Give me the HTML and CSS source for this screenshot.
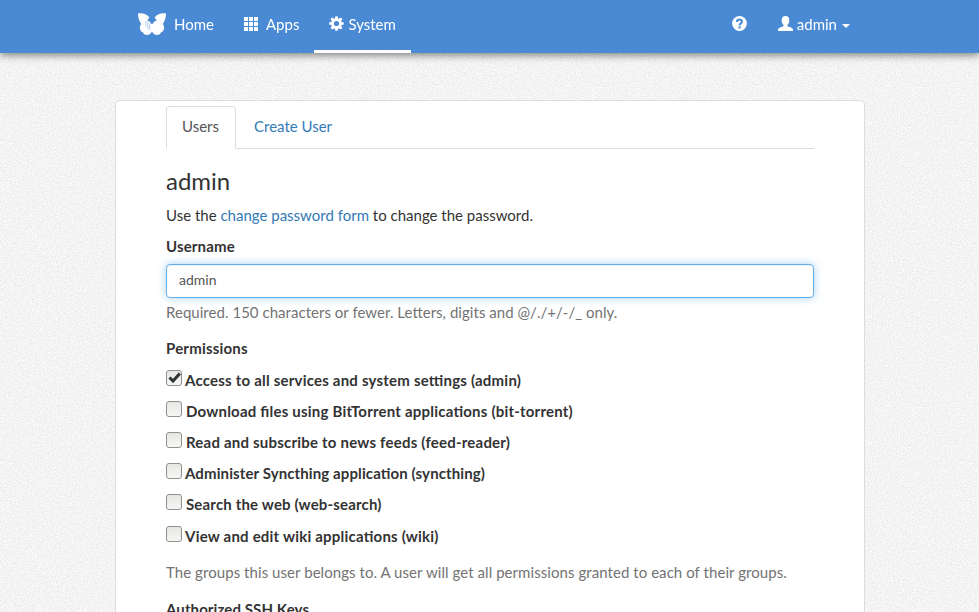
FILE: index.html
```html
<!DOCTYPE html>
<html lang="en">
<head>
<meta charset="utf-8">
<title>admin</title>
<link rel="stylesheet" href="styles.css">
</head>
<body>
<svg class="grain" aria-hidden="true">
  <filter id="grain" x="0" y="0" width="100%" height="100%" color-interpolation-filters="sRGB">
    <feTurbulence type="fractalNoise" baseFrequency="0.8" numOctaves="4" seed="4"/>
    <feColorMatrix values="0.15 0 0 0 0.88  0.15 0 0 0 0.88  0.15 0 0 0 0.88  0 0 0 0 1"/>
  </filter>
  <rect width="100%" height="100%" filter="url(#grain)"/>
</svg>
<header class="navbar">
  <div class="container">
    <nav class="nav">
      <a class="home" href="#"><svg class="logo" viewBox="0 0 28 23"><path fill="#fff" d="M0 .5C4-.5 9 1 11.500 4.500L9 7.500L11 8L13.200 10.500Q14 11.500 14.800 10.500L17 8L19 7.500L16.500 4.500C19 1 24-.5 28 .5C28 4 27 8 24.800 11C27 13.500 26.500 18 23 19.500C21.500 23.200 16 22.800 14 18.500C12 22.800 6.500 23.200 5 19.500C1.500 18 1 13.500 3.200 11C1 8 0 4 0 .5Z"/><path d="M7.800 8V13.500M9.800 8.500V16M11.700 10V17.500" stroke="#4a8ad4" stroke-width=".6" opacity=".7"/></svg><span>Home</span></a>
      <a class="apps" href="#"><svg class="grid-icon" viewBox="0 0 14 14"><path fill="#fff" d="M0 0h4v4H0zM5 0h4v4H5zM10 0h4v4h-4zM0 5h4v4H0zM5 5h4v4H5zM10 5h4v4h-4zM0 10h4v4H0zM5 10h4v4H5zM10 10h4v4h-4z"/></svg><span>Apps</span></a>
      <a class="system active" href="#"><svg class="cog" viewBox="0 0 15 15"><mask id="hub" maskUnits="userSpaceOnUse" x="0" y="0" width="15" height="15"><rect width="15" height="15" fill="#fff"/><circle cx="7.500" cy="7.500" r="2.600" fill="#000"/></mask><g mask="url(#hub)" fill="#fff"><circle cx="7.500" cy="7.500" r="5.300"/><path id="t" d="M5.900 2.500L6.400.2h2.200l.5 2.300v10l-.5 2.300H6.400l-.5-2.300z"/><use href="#t" transform="rotate(45 7.500 7.500)"/><use href="#t" transform="rotate(90 7.500 7.500)"/><use href="#t" transform="rotate(135 7.500 7.500)"/></g></svg><span>System</span></a>
    </nav>
    <nav class="nav">
      <a class="help" href="#" aria-label="Help"><svg viewBox="0 0 15 15"><circle cx="7.500" cy="7.500" r="7.400" fill="#fff"/><path d="M4.900 6.100C4.900 2.700 10 2.900 10 5.700C10 7.500 7.600 7.200 7.600 9.400" fill="none" stroke="#4a8ad4" stroke-width="2"/><path d="M6.500 10.400h2.200v2.100H6.500z" fill="#4a8ad4"/></svg></a>
      <a class="user" href="#"><svg viewBox="0 0 15 15"><path fill="#fff" d="M7.500 0C10 0 11.300 1.600 11.300 4.200C11.300 6.300 10.700 7.700 9.500 8.700V10.200C11 11 14 11.600 14.600 12.600C15 13.200 15 14 15 15H0C0 14 0 13.200.4 12.600C1 11.600 4 11 5.500 10.200V8.700C4.300 7.700 3.700 6.300 3.700 4.200C3.700 1.600 5 0 7.500 0Z"/></svg><span>admin</span><i class="caret"></i></a>
    </nav>
  </div>
</header>
<main class="card">
  <ul class="tabs">
    <li class="current"><a href="#">Users</a></li>
    <li><a href="#">Create User</a></li>
  </ul>
  <h3>admin</h3>
  <p class="intro">Use the <a href="#">change password form</a> to change the password.</p>
  <form>
    <label class="label" for="username">Username</label>
    <input class="field" id="username" type="text" value="admin">
    <p class="help-text">Required. 150 characters or fewer. Letters, digits and @/./+/-/_ only.</p>
    <div class="label permissions">Permissions</div>
    <ul class="checks">
      <li><label><span class="box"><svg viewBox="0 0 16 16"><path d="M3.500 7.500L7 11L13.800 3.600" fill="none" stroke="#2e3436" stroke-width="3"/></svg></span><span class="tight">Access to all services and system settings (admin)</span></label></li>
      <li><label><span class="box"></span><span>Download files using BitTorrent applications (bit-torrent)</span></label></li>
      <li><label><span class="box"></span><span>Read and subscribe to news feeds (feed-reader)</span></label></li>
      <li><label><span class="box"></span><span class="tight narrow">Administer Syncthing application (syncthing)</span></label></li>
      <li><label><span class="box"></span><span class="search">Search the web (web-search)</span></label></li>
      <li><label><span class="box"></span><span class="tight">View and edit wiki applications (wiki)</span></label></li>
    </ul>
    <p class="help-text groups">The groups this user belongs to. A user will get all permissions granted to each of their groups.</p>
    <div class="label keys">Authorized SSH Keys</div>
  </form>
</main>
</body>
</html>
```
FILE: styles.css
```css
* { box-sizing: border-box; }
html { height: 100%; overflow: hidden; }
body {
  margin: 0;
  height: 100%;
  overflow: hidden;
  background: #f2f2f2;
  color: #333;
  font: 15px/21.4px Lato, "Liberation Sans", sans-serif;
  font-feature-settings: "liga" 1;
}
a { color: #337ab7; text-decoration: none; }
ul { margin: 0; padding: 0; list-style: none; }
svg { display: block; flex: none; }
.grain { position: fixed; inset: 0; width: 100%; height: 100%; z-index: -1; }
.navbar {
  position: relative;
  height: 53px;
  background: #4a8ad4;
  box-shadow: 0 2px 8px rgba(0, 0, 0, .5);
}
.container {
  display: flex;
  justify-content: space-between;
  width: 742px;
  height: 53px;
  margin-left: 123px;
}
.nav { display: flex; }
.nav a {
  display: flex;
  align-items: center;
  height: 53px;
  padding: 0 15px 4px;
  color: #fff;
}
.logo { width: 28px; height: 23px; margin: 0 8px 0 0; }
.grid-icon { width: 14px; height: 14px; margin: -1px 8px 0 0; }
.nav .active { border-bottom: 3px solid #fff; padding-bottom: 1px; }
.cog { width: 15px; height: 15px; margin: -2px 4px 0 0; }
.help svg, .user svg { width: 15px; height: 15px; margin-top: -2px; }
.help { margin-right: 1px; }
.user svg { margin-right: 4px; }
.caret {
  margin: 3px 0 0 5px;
  border: 4px solid transparent;
  border-top-color: #fff;
  border-bottom: 0;
}
.card {
  width: 750px;
  height: 512px;
  margin: 47px 0 0 115px;
  padding: 5px 50px 0;
  background: #fff;
  border: 1px solid #ddd;
  border-bottom: 0;
  border-radius: 5px 5px 0 0;
}
.tabs { display: flex; height: 43px; border-bottom: 1px solid #ddd; }
.tabs li { height: 43px; margin-right: 2px; }
.tabs a {
  display: block;
  height: 43px;
  padding: 9px 15px;
  border: 1px solid transparent;
  border-radius: 4px 4px 0 0;
}
.tabs .current a { width: 70px; color: #555; background: #fff; border-color: #ddd #ddd #fff; }
h3 { margin: 19px 0 11px; font-size: 24px; line-height: 26px; font-weight: 400; }
.intro { margin: 0 0 10px; }
.label { display: block; height: 21px; margin-bottom: 7px; font-weight: 700; letter-spacing: .15px; }
.field {
  display: block;
  width: 100%;
  height: 34px;
  padding: 4px 12px 8px;
  border: 1px solid #66afe9;
  border-radius: 4px;
  outline: 0;
  color: #555;
  background: #fff;
  box-shadow: inset 0 1px 1px rgba(0, 0, 0, .075), 0 0 8px rgba(102, 175, 233, .6);
  font: 14px/20px Lato, "Liberation Sans", sans-serif;
}
.help-text { margin: 4px 0 14px; color: #737373; letter-spacing: .035px; }
.permissions { margin-bottom: 11px; letter-spacing: .2px; }
.checks li { height: 31.1px; }
.checks li:last-child { padding-top: 1px; }
.checks label { display: flex; font-weight: 700; letter-spacing: .21px; }
.checks .narrow { letter-spacing: .11px; }
.checks .search { letter-spacing: .17px; }
.groups { margin: 5.6px 0 16px; letter-spacing: .062px; }
.keys { height: 17px; margin: 0; letter-spacing: .1px; }
.box {
  flex: none;
  width: 16px;
  height: 16px;
  margin: 0 4px 0 0;
  border: 1px solid #8f8f8c;
  border-radius: 3px;
  background: linear-gradient(#e6e6e4, #f7f7f6);
}
.box svg { width: 16px; height: 16px; margin: -1px; }
.tight { margin-left: -1px; }
```
